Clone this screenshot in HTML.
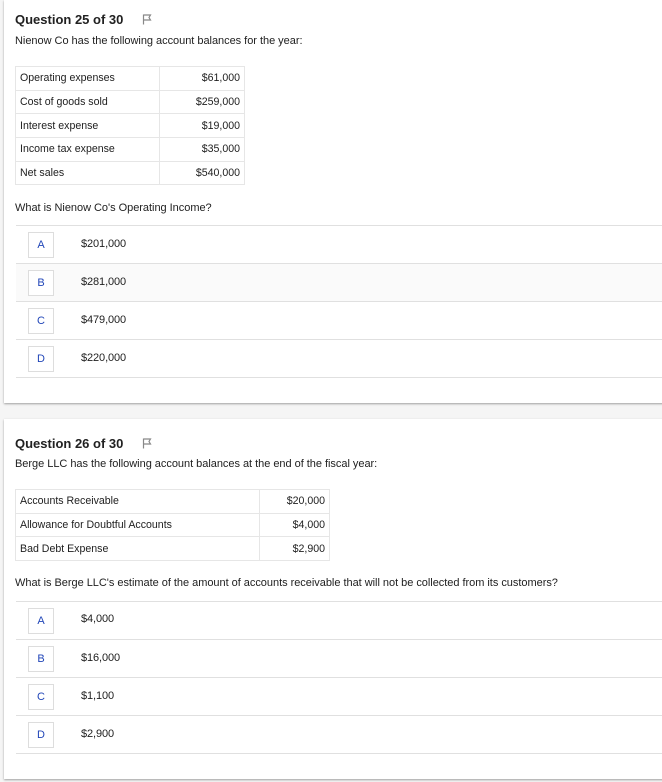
<!DOCTYPE html>
<html><head><meta charset="utf-8"><style>
*{box-sizing:border-box;margin:0;padding:0}
body{width:662px;height:782px;background:#f5f5f5;font-family:"Liberation Sans",Arial,sans-serif;color:#212121;position:relative;overflow:hidden}
.card{position:absolute;left:4px;width:662px;background:#fff;box-shadow:0 1px 2px rgba(0,0,0,.35)}
.abs{position:absolute}
.h{font-size:13px;font-weight:bold;left:11px}
.p{font-size:11px;left:11px;letter-spacing:-0.03px}
table{position:absolute;left:11px;border-collapse:collapse;font-size:10.6px}
td{border:1px solid #e6e6e6;padding:0 4px;height:23.7px}
td.r{text-align:right}
.row{position:absolute;left:12px;width:650px;height:38px;border-top:1px solid #e0e0e0;font-size:11px}
.row.last{border-bottom:1px solid #e0e0e0}
.box{position:absolute;left:12px;top:6px;width:26px;height:26px;border:1px solid #ddd;color:#2146b8;text-align:center;line-height:25px;font-size:11px}
.val{position:absolute;left:65px;top:12px;letter-spacing:-0.1px}
.flag{position:absolute;width:11px;height:11px}
</style></head><body>
<div class="card" style="top:0;height:403px">
  <div class="abs h" style="top:12px">Question 25 of 30</div>
  <svg class="flag" style="left:138px;top:14px" viewBox="0 0 11 11"><path d="M1.5 0.5V10.5M1.5 1H8.5L7 3.5L8.5 6H1.5" fill="none" stroke="#888" stroke-width="1.2"/></svg>
  <div class="abs p" style="top:35px">Nienow Co has the following account balances for the year:</div>
  <table style="top:66px;width:230px">
    <tr><td style="width:144px">Operating expenses</td><td class="r">$61,000</td></tr>
    <tr><td>Cost of goods sold</td><td class="r">$259,000</td></tr>
    <tr><td>Interest expense</td><td class="r">$19,000</td></tr>
    <tr><td>Income tax expense</td><td class="r">$35,000</td></tr>
    <tr><td>Net sales</td><td class="r">$540,000</td></tr>
  </table>
  <div class="abs p" style="top:202px">What is Nienow Co's Operating Income?</div>
  <div class="row" style="top:225px"><div class="box">A</div><div class="val">$201,000</div></div>
  <div class="row" style="top:263px;background:#fafafa"><div class="box" style="background:#fff">B</div><div class="val">$281,000</div></div>
  <div class="row" style="top:301px"><div class="box">C</div><div class="val">$479,000</div></div>
  <div class="row last" style="top:339px;height:39px"><div class="box">D</div><div class="val">$220,000</div></div>
</div>
<div class="card" style="top:419px;height:360px">
  <div class="abs h" style="top:17px">Question 26 of 30</div>
  <svg class="flag" style="left:138px;top:19px" viewBox="0 0 11 11"><path d="M1.5 0.5V10.5M1.5 1H8.5L7 3.5L8.5 6H1.5" fill="none" stroke="#888" stroke-width="1.2"/></svg>
  <div class="abs p" style="top:39px">Berge LLC has the following account balances at the end of the fiscal year:</div>
  <table style="top:70px;width:315px">
    <tr><td style="width:244px">Accounts Receivable</td><td class="r">$20,000</td></tr>
    <tr><td>Allowance for Doubtful Accounts</td><td class="r">$4,000</td></tr>
    <tr><td>Bad Debt Expense</td><td class="r">$2,900</td></tr>
  </table>
  <div class="abs p" style="top:158px">What is Berge LLC's estimate of the amount of accounts receivable that will not be collected from its customers?</div>
  <div class="row" style="top:182px"><div class="box">A</div><div class="val" style="top:11px">$4,000</div></div>
  <div class="row" style="top:220px"><div class="box">B</div><div class="val">$16,000</div></div>
  <div class="row" style="top:258px"><div class="box">C</div><div class="val">$1,100</div></div>
  <div class="row last" style="top:296px;height:39px"><div class="box">D</div><div class="val">$2,900</div></div>
</div>
</body></html>
